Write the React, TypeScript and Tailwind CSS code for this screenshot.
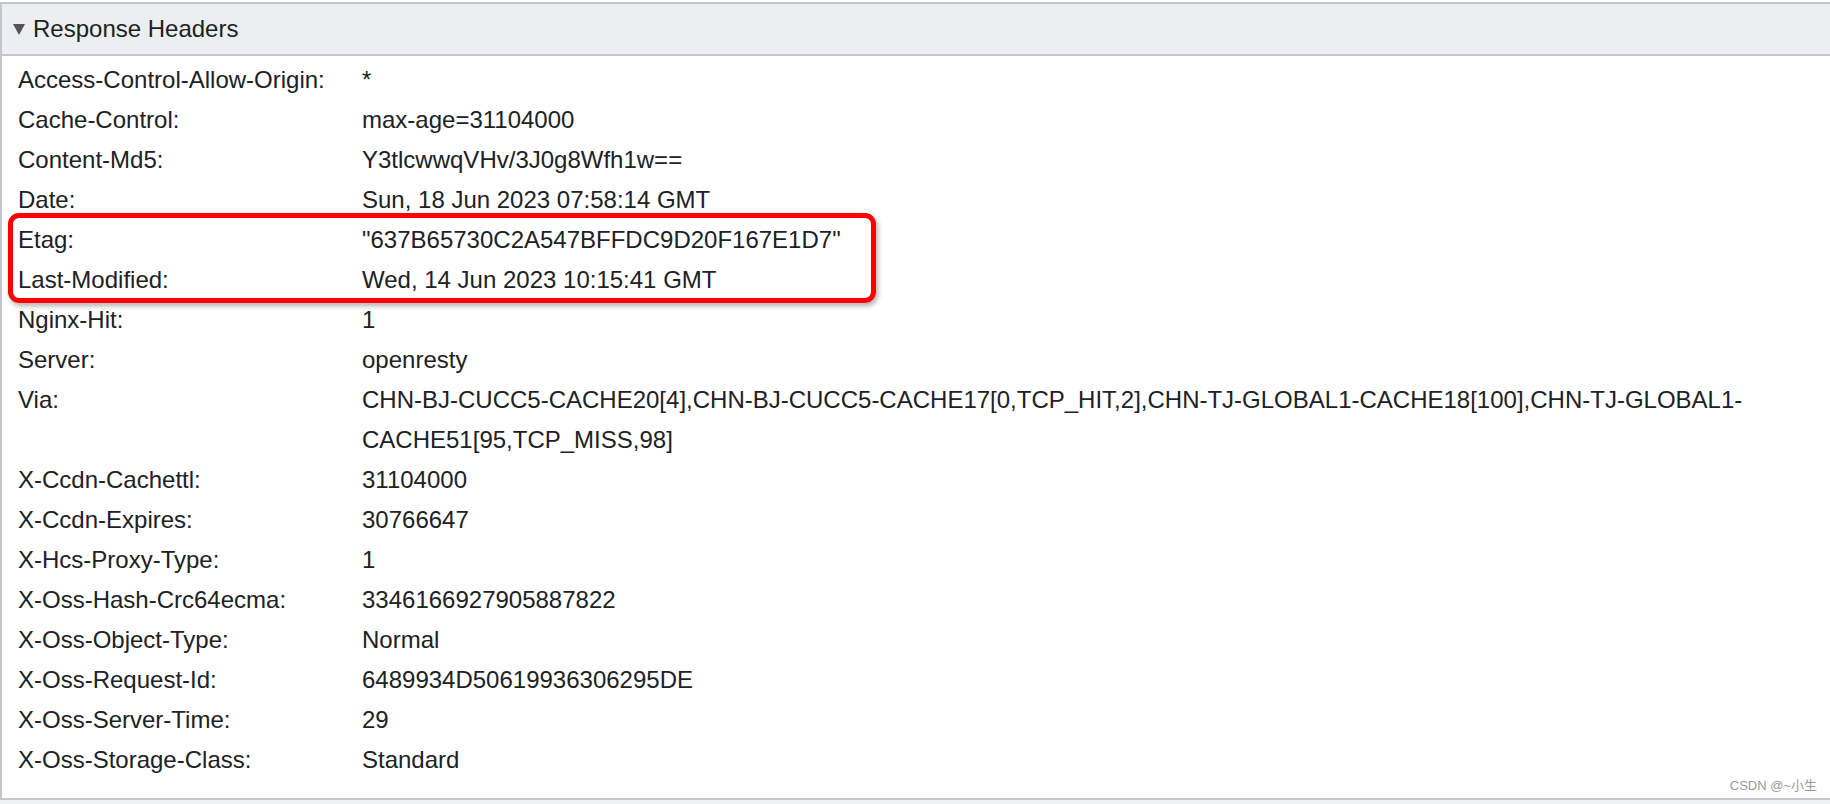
import { FC } from 'react';

const headers: [string, string][] = [
  ['Access-Control-Allow-Origin:', '*'],
  ['Cache-Control:', 'max-age=31104000'],
  ['Content-Md5:', 'Y3tlcwwqVHv/3J0g8Wfh1w=='],
  ['Date:', 'Sun, 18 Jun 2023 07:58:14 GMT'],
  ['Etag:', '"637B65730C2A547BFFDC9D20F167E1D7"'],
  ['Last-Modified:', 'Wed, 14 Jun 2023 10:15:41 GMT'],
  ['Nginx-Hit:', '1'],
  ['Server:', 'openresty'],
  [
    'Via:',
    'CHN-BJ-CUCC5-CACHE20[4],CHN-BJ-CUCC5-CACHE17[0,TCP_HIT,2],CHN-TJ-GLOBAL1-CACHE18[100],CHN-TJ-GLOBAL1-CACHE51[95,TCP_MISS,98]',
  ],
  ['X-Ccdn-Cachettl:', '31104000'],
  ['X-Ccdn-Expires:', '30766647'],
  ['X-Hcs-Proxy-Type:', '1'],
  ['X-Oss-Hash-Crc64ecma:', '3346166927905887822'],
  ['X-Oss-Object-Type:', 'Normal'],
  ['X-Oss-Request-Id:', '6489934D50619936306295DE'],
  ['X-Oss-Server-Time:', '29'],
  ['X-Oss-Storage-Class:', 'Standard'],
];

// watermark lattice: diamond grid, 390 x 380 with half offset
const marks: { x: number; y: number }[] = [];
for (let i = -2; i <= 10; i++) {
  for (let j = -1; j <= 5; j++) {
    if ((i + j) % 2 !== 0) {
      marks.push({ x: 51 + 195 * i, y: 34 + 190 * j });
    }
  }
}

const Watermark: FC<{ x: number; y: number }> = ({ x, y }) => (
  <div
    className="absolute origin-top-left rotate-[-43.5deg] text-[30px] leading-[40px] font-light text-black/[0.025] whitespace-nowrap"
    style={{ left: x, top: y, fontFamily: 'Lato, "Liberation Sans", sans-serif' }}
  >
    <div>7A8D7A879B</div>
    <div>675A6A934C</div>
    <div>6C88BBB307</div>
    <div>D1</div>
  </div>
);

const App: FC = () => {
  return (
    <div
      className="relative w-[1830px] h-[804px] overflow-hidden bg-white text-[#202124] flex flex-col pt-[2px]"
      style={{ fontFamily: '"Liberation Sans", Arial, "Noto Sans CJK SC", sans-serif' }}
    >
      <div className="flex-1 flex flex-col border-l-2 border-[#c3c7cc]">
        <div className="h-[54px] flex items-center bg-[#ebeff1] border-y-2 border-[#c3c7cc] pl-[11px] gap-[8px] text-[24px]">
          <svg width="12" height="11" viewBox="0 0 12 11">
            <polygon points="0,0 12,0 6,11" fill="#555" />
          </svg>
          <span>Response Headers</span>
        </div>
        <div className="flex-1 pt-[4px] pl-[16px] pr-[60px] text-[24px] leading-[40px]">
          {headers.map(([k, v]) => (
            <div key={k} className="flex">
              <div className="w-[344px] shrink-0">{k}</div>
              <div className="flex-1 break-words">{v}</div>
            </div>
          ))}
        </div>
      </div>
      <div className="h-[6px] border-t-2 border-[#c3c7cc] bg-[#eef0f2]" />

      {/* highlight box */}
      <div className="absolute left-[8px] top-[213px] w-[868px] h-[90px] border-[5px] border-[#ff0000] rounded-[11px] shadow-[2px_3px_5px_rgba(0,0,0,0.3)] pointer-events-none" />

      <div className="absolute inset-0 pointer-events-none">
        {marks.map((m) => (
          <Watermark key={`${m.x}-${m.y}`} x={m.x} y={m.y} />
        ))}
      </div>

      <div className="absolute right-[13px] bottom-[10px] text-[13px] leading-[16px] text-[#9a9a9a]">
        CSDN @~小生
      </div>
    </div>
  );
};

export default App;
